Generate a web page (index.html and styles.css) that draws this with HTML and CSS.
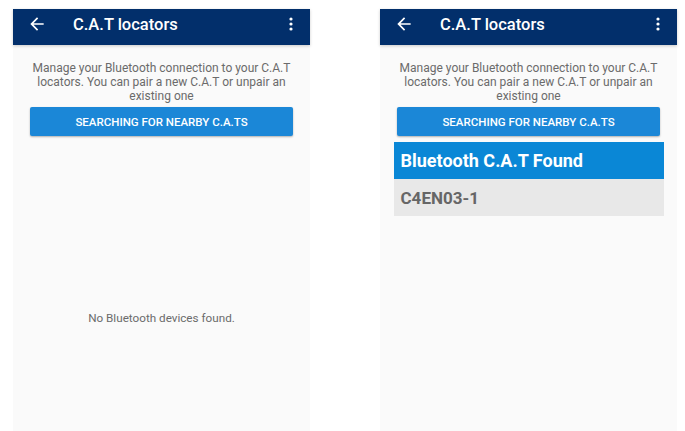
FILE: index.html
```html
<!DOCTYPE html>
<html>
<head>
<meta charset="utf-8">
<link rel="stylesheet" href="styles.css">
</head>
<body>
<div class="screens">
  <section class="phone">
    <header class="appbar">
      <svg class="icon back" viewBox="0 0 24 24" width="20" height="20"><path d="M20 11H7.83l5.59-5.59L12 4l-8 8 8 8 1.41-1.41L7.83 13H20v-2z" fill="#fff"/></svg>
      <h1 class="title">C.A.T locators</h1>
      <svg class="icon more" viewBox="0 0 4 14" width="4" height="14"><circle cx="2" cy="2" r="1.6" fill="#fff"/><circle cx="2" cy="7" r="1.6" fill="#fff"/><circle cx="2" cy="12" r="1.6" fill="#fff"/></svg>
    </header>
    <div class="content">
      <p class="intro">Manage your Bluetooth connection to your C.A.T locators. You can pair a new C.A.T or unpair an existing one</p>
      <button class="search">SEARCHING FOR NEARBY C.A.TS</button>
      <p class="empty">No Bluetooth devices found.</p>
    </div>
  </section>
  <section class="phone">
    <header class="appbar">
      <svg class="icon back" viewBox="0 0 24 24" width="20" height="20"><path d="M20 11H7.83l5.59-5.59L12 4l-8 8 8 8 1.41-1.41L7.83 13H20v-2z" fill="#fff"/></svg>
      <h1 class="title">C.A.T locators</h1>
      <svg class="icon more" viewBox="0 0 4 14" width="4" height="14"><circle cx="2" cy="2" r="1.6" fill="#fff"/><circle cx="2" cy="7" r="1.6" fill="#fff"/><circle cx="2" cy="12" r="1.6" fill="#fff"/></svg>
    </header>
    <div class="content">
      <p class="intro">Manage your Bluetooth connection to your C.A.T locators. You can pair a new C.A.T or unpair an existing one</p>
      <button class="search">SEARCHING FOR NEARBY C.A.TS</button>
      <div class="found">
        <div class="found-head">Bluetooth C.A.T Found</div>
        <div class="found-item">C4EN03-1</div>
      </div>
    </div>
  </section>
</div>
</body>
</html>
```
FILE: styles.css
```css
html, body {
  margin: 0;
  padding: 0;
  background: #fff;
  font-family: Roboto, "Liberation Sans", sans-serif;
  overflow: hidden;
}
.screens {
  display: flex;
  gap: 70px;
  padding: 9px 0 0 13px;
  height: 431px;
  box-sizing: border-box;
}
.phone {
  width: 297px;
  display: flex;
  flex-direction: column;
  background: #fafafa;
}
.appbar {
  height: 36px;
  box-sizing: border-box;
  background: #022f6b;
  display: flex;
  align-items: center;
  padding: 0 17px 6px 14px;
  box-shadow: 0 1px 3px rgba(0,0,0,0.2);
  position: relative;
}
.back {
  flex: none;
}
.title {
  margin: 0 0 0 26px;
  font-size: 16.5px;
  font-weight: 500;
  color: #fff;
  flex: 1;
}
.more {
  flex: none;
}
.content {
  flex: 1;
  display: flex;
  flex-direction: column;
  align-items: center;
}
.intro {
  margin: 16px 16px 0;
  font-size: 12px;
  line-height: 14px;
  color: #6b6b6b;
  text-align: center;
}
.search {
  margin-top: 4px;
  width: 263px;
  height: 29px;
  border: none;
  border-radius: 2px;
  background: #1b87d7;
  color: #fff;
  font-family: Roboto, "Liberation Sans", sans-serif;
  font-size: 11.5px;
  font-weight: 500;
  box-shadow: 0 1px 2px rgba(0,0,0,0.3);
  padding: 0;
}
.empty {
  margin: 175px 0 0;
  font-size: 11.7px;
  color: #6b6b6b;
}
.found {
  margin-top: 6px;
  width: 270px;
}
.found-head {
  height: 37px;
  background: #0a87d6;
  color: #fff;
  font-weight: 700;
  font-size: 18px;
  display: flex;
  align-items: center;
  padding-left: 7px;
}
.found-item {
  height: 37px;
  background: #e8e8e8;
  color: #666;
  font-weight: 700;
  font-size: 17px;
  display: flex;
  align-items: center;
  padding-left: 7px;
}
```
